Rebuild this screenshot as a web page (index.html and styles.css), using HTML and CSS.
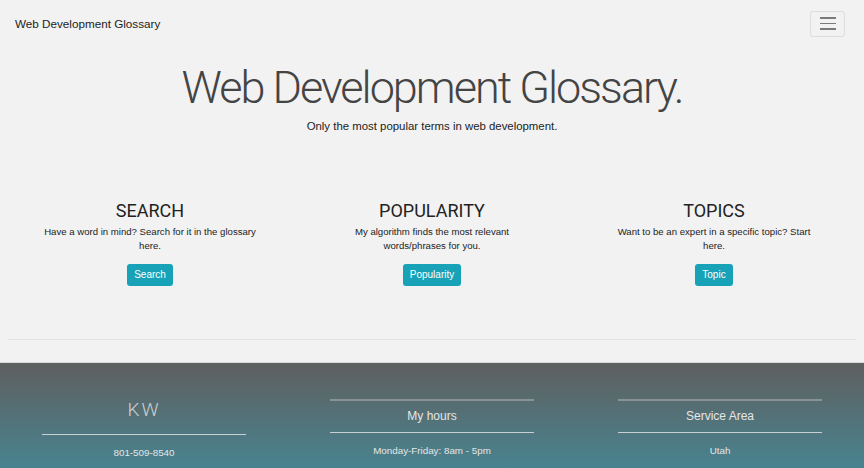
FILE: index.html
```html
<!DOCTYPE html>
<html>
<head>
<meta charset="utf-8">
<link rel="stylesheet" href="styles.css">
</head>
<body>
<nav class="navbar">
  <a class="brand" href="#">Web Development Glossary</a>
  <button class="toggler" aria-label="menu">
    <span></span><span></span><span></span>
  </button>
</nav>
<header class="hero">
  <h1>Web Development Glossary.</h1>
  <p>Only the most popular terms in web development.</p>
</header>
<section class="features">
  <div class="feature">
    <h2>SEARCH</h2>
    <p>Have a word in mind? Search for it in the glossary here.</p>
    <a class="btn" href="#">Search</a>
  </div>
  <div class="feature">
    <h2>POPULARITY</h2>
    <p>My algorithm finds the most relevant words/phrases for you.</p>
    <a class="btn" href="#">Popularity</a>
  </div>
  <div class="feature">
    <h2>TOPICS</h2>
    <p>Want to be an expert in a specific topic? Start here.</p>
    <a class="btn" href="#">Topic</a>
  </div>
</section>
<hr class="divider">
<footer class="footer">
  <div class="fcol">
    <div class="logo">KW</div>
    <div class="rule"></div>
    <div class="ftext">801-509-8540</div>
  </div>
  <div class="fcol">
    <div class="rule top"></div>
    <div class="ftitle">My hours</div>
    <div class="rule"></div>
    <div class="ftext">Monday-Friday: 8am - 5pm</div>
  </div>
  <div class="fcol">
    <div class="rule top"></div>
    <div class="ftitle">Service Area</div>
    <div class="rule"></div>
    <div class="ftext">Utah</div>
  </div>
</footer>
</body>
</html>
```
FILE: styles.css
```css
* { box-sizing: border-box; }
html, body { margin: 0; padding: 0; }
body {
  background: #f2f2f2;
  font-family: "Liberation Sans", Arial, sans-serif;
  color: #222;
}
.navbar {
  height: 47px;
  padding: 0 19px 0 15px;
  display: flex;
  align-items: center;
  justify-content: space-between;
}
.brand {
  font-size: 11.7px;
  color: #222;
  text-decoration: none;
}
.toggler {
  width: 35px;
  height: 26px;
  border: 1px solid #dcdcdc;
  border-radius: 3px;
  background: transparent;
  display: flex;
  flex-direction: column;
  align-items: center;
  justify-content: center;
  gap: 4px;
  padding: 0;
}
.toggler span {
  display: block;
  width: 16px;
  height: 1.5px;
  background: #7a7a7a;
}
.hero {
  text-align: center;
  padding-top: 14px;
}
.hero h1 {
  margin: 0;
  font-family: Roboto, "Liberation Sans", sans-serif;
  font-weight: 300;
  font-size: 45px;
  letter-spacing: -2px;
  line-height: 54px;
  color: #444;
}
.hero p {
  margin: 5px 0 0;
  font-size: 11.4px;
  color: #222;
}
.features {
  display: flex;
  padding: 68px 9px 0;
}
.feature {
  flex: 1;
  padding: 0 33.5px;
  text-align: center;
}
.feature h2 {
  margin: 0;
  font-family: Roboto, "Liberation Sans", sans-serif;
  font-weight: 400;
  font-size: 18px;
  line-height: 22px;
  color: #222;
}
.feature p {
  margin: 3px 0 11px;
  font-size: 9.6px;
  line-height: 14px;
  color: #222;
}
.btn {
  display: inline-block;
  background: #17a2b8;
  color: #fff;
  font-size: 10px;
  line-height: 22px;
  padding: 0 7px;
  border-radius: 3px;
  text-decoration: none;
}
.divider {
  margin: 53px 8px 0;
  border: 0;
  border-top: 1px solid #e3e3e3;
  height: 0;
}
.footer {
  margin-top: 22px;
  border-top: 1px solid #dadada;
  background: linear-gradient(#5f5f5f, #478592 110px, #3d8f9f);
  display: flex;
  padding-top: 36px;
  min-height: 140px;
}
.fcol {
  flex: 1;
  padding: 0 42px;
  text-align: center;
  color: #e6e6e6;
}
.logo {
  font-family: Roboto, sans-serif;
  font-weight: 300;
  font-size: 19px;
  letter-spacing: 2px;
  line-height: 22px;
  color: #d0d0d0;
  margin: 0 0 13px;
}
.rule {
  border-top: 1px solid #c9d2d3;
}
.rule.top {
  border-top: 2px solid #8a9293;
}
.ftitle {
  font-size: 12px;
  line-height: 31px;
  color: #e6e6e6;
}
.ftext {
  font-size: 9.8px;
  line-height: 14px;
  margin-top: 11px;
  color: #e6e6e6;
}
```
